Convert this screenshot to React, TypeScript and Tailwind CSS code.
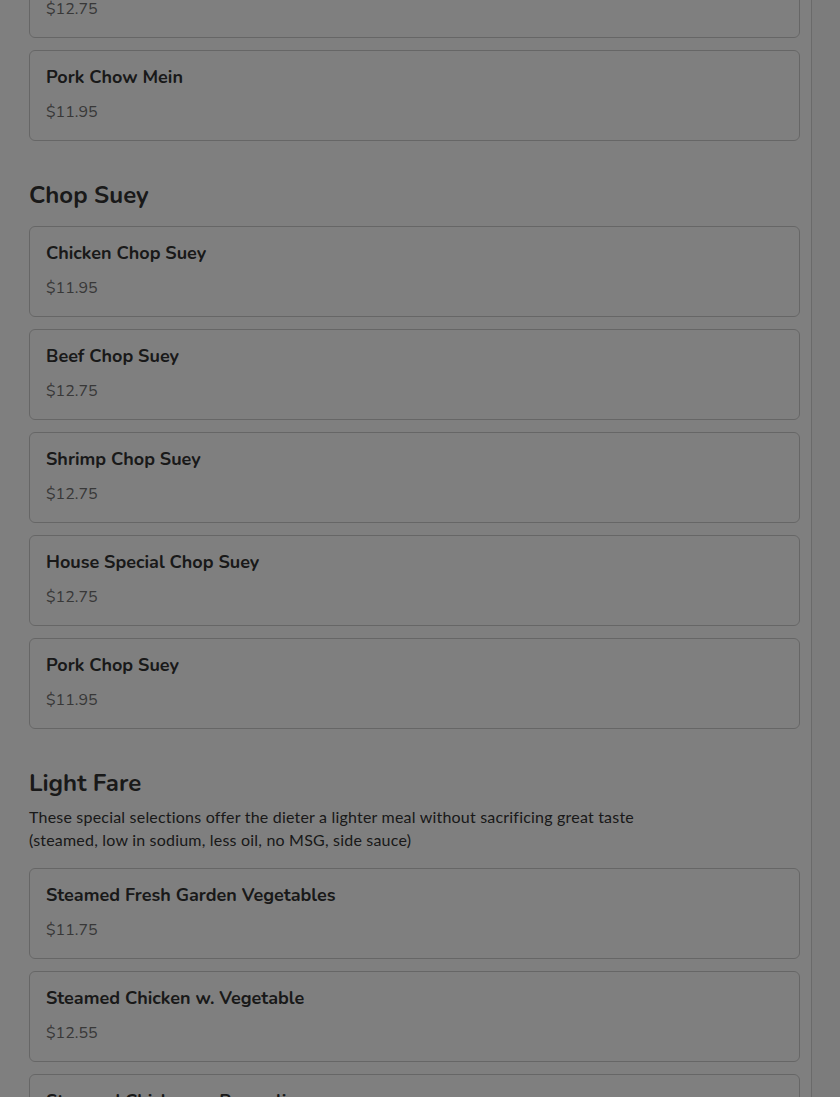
import React from "react";

type Item = { name: string; price: string };

const font = { fontFamily: "Nunito, Lato, 'Open Sans', sans-serif" };

function Card({ item }: { item: Item }) {
  return (
    <div className="h-[91px] rounded-[6px] border border-[#cdcdcd] bg-white px-4 pt-[15px]">
      <div className="text-[18px] leading-[22px] font-bold text-[#333333]">{item.name}</div>
      <div className="mt-3 text-[16px] leading-[24px] text-[#707070]">{item.price}</div>
    </div>
  );
}

function Heading({ children }: { children: React.ReactNode }) {
  return <h2 className="text-[24px] leading-[32px] font-bold text-[#333333]">{children}</h2>;
}

export default function App() {
  const chowTail: Item[] = [
    { name: "Beef Chow Mein", price: "$12.75" },
    { name: "Pork Chow Mein", price: "$11.95" },
  ];
  const chopSuey: Item[] = [
    { name: "Chicken Chop Suey", price: "$11.95" },
    { name: "Beef Chop Suey", price: "$12.75" },
    { name: "Shrimp Chop Suey", price: "$12.75" },
    { name: "House Special Chop Suey", price: "$12.75" },
    { name: "Pork Chop Suey", price: "$11.95" },
  ];
  const light: Item[] = [
    { name: "Steamed Fresh Garden Vegetables", price: "$11.75" },
    { name: "Steamed Chicken w. Vegetable", price: "$12.55" },
    { name: "Steamed Chicken w. Broccoli", price: "$12.55" },
  ];
  return (
    <div className="relative h-[1097px] w-[840px] overflow-hidden bg-white" style={font}>
      <div className="flex h-full">
        <main className="w-[812px] shrink-0 border-r border-[#d4d4d4] pl-[29px] pr-[11px]">
          <div className="-mt-[53px] flex flex-col gap-3">
            {chowTail.map((it) => (
              <Card key={it.name} item={it} />
            ))}
          </div>
          <div className="mt-[38px]">
            <Heading>Chop Suey</Heading>
          </div>
          <div className="mt-[15px] flex flex-col gap-3">
            {chopSuey.map((it) => (
              <Card key={it.name} item={it} />
            ))}
          </div>
          <div className="mt-[38px]">
            <Heading>Light Fare</Heading>
          </div>
          <p
            className="mt-[6px] text-[16px] leading-[23px] tracking-[0.2px] text-[#333333]"
            style={{ fontFamily: "Lato, 'Open Sans', sans-serif" }}
          >
            These special selections offer the dieter a lighter meal without sacrificing great taste
            <br />
            (steamed, low in sodium, less oil, no MSG, side sauce)
          </p>
          <div className="mt-[17px] flex flex-col gap-3">
            {light.map((it) => (
              <Card key={it.name} item={it} />
            ))}
          </div>
        </main>
        <aside className="flex-1 bg-[#f8f8f8]" />
      </div>
      <div className="absolute inset-0 bg-black/50" />
    </div>
  );
}
